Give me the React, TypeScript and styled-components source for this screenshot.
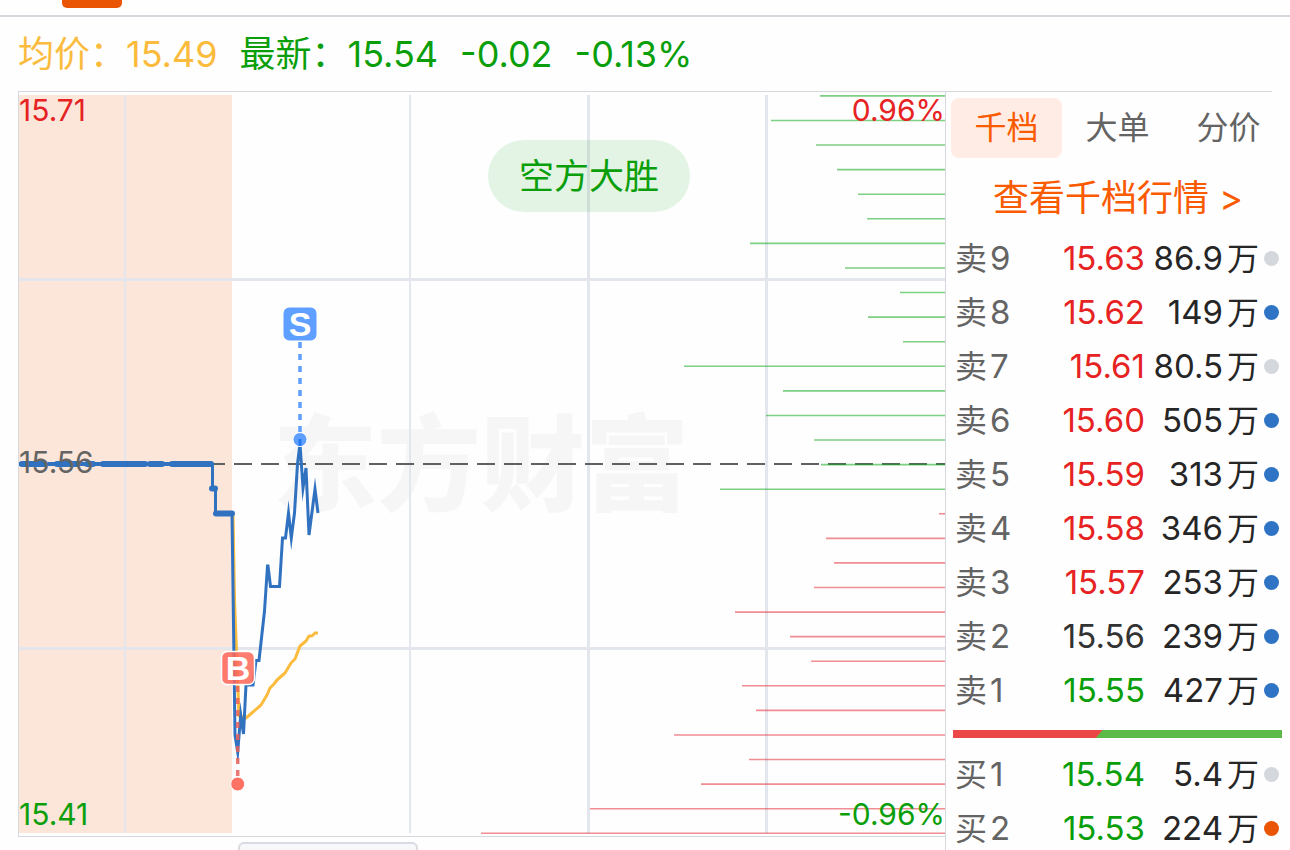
import React from "react";
import styled, { createGlobalStyle } from "styled-components";

const color = {
  rise: "#e62222",
  fall: "#0a9f0a",
  flat: "#333333",
  label: "#646464",
  ink: "#262626",
  accent: "#fa5a00",
  brand: "#ea5504",
  average: "#fbbb3c",
  line: "#d6d8de",
  grid: "#e4e6ee",
  price: "#3072c0",
  sell: "#5e9fff",
  buy: "#ff7364",
};

const GlobalStyle = createGlobalStyle`
  *, *::before, *::after { box-sizing: border-box; }
  body {
    margin: 0;
    background: #fefefe;
    font-family: Inter, "Noto Sans CJK SC", sans-serif;
    color: ${color.ink};
  }
`;

const Page = styled.main`
  height: 100vh;
  overflow: hidden;
  display: flex;
  flex-direction: column;
`;

const TabStrip = styled.div`
  flex: none;
  height: 17px;
  padding-left: 62px;
  border-bottom: 2px solid ${color.line};
`;

const TabIndicator = styled.div`
  width: 60px;
  height: 8px;
  border-radius: 0 0 5px 5px;
  background: ${color.brand};
`;

const Quote = styled.header`
  flex: none;
  height: 74px;
  padding: 0 18px;
  display: flex;
  align-items: center;
  gap: 22px;
  font-size: 36px;
  line-height: 40px;
  white-space: nowrap;
`;

const QuoteItem = styled.span<{ $tone: string }>`
  color: ${(p) => p.$tone};
`;

const Rule = styled.div`
  flex: none;
  height: 1px;
  margin: 0 18px;
  background: ${color.line};
`;

const Body = styled.div`
  flex: 1;
  min-height: 0;
  display: flex;
  padding-left: 18px;
`;

const ChartColumn = styled.section`
  flex: 1;
  min-width: 0;
  border-right: 1px solid ${color.line};
`;

const ChartFrame = styled.div`
  position: relative;
  border-left: 1px solid ${color.line};
  border-bottom: 1px solid ${color.line};
`;

const ChartSvg = styled.svg`
  display: block;
  width: 100%;
  height: auto;
`;

const Watermark = styled.text`
  font-family: "Noto Sans CJK SC", sans-serif;
  font-size: 104px;
  font-weight: 900;
  fill: #f6f6f6;
`;

const AxisText = styled.text<{ $tone: string }>`
  font-size: 30px;
  fill: ${(p) => p.$tone};
`;

const MarkerText = styled.text`
  font-family: "Liberation Sans", sans-serif;
  font-size: 34px;
  font-weight: 700;
  fill: #ffffff;
  text-anchor: middle;
`;

const Verdict = styled.div`
  position: absolute;
  top: 48px;
  left: 50%;
  margin-left: 6px;
  width: 202px;
  height: 72px;
  border-radius: 36px;
  display: flex;
  align-items: center;
  justify-content: center;
  background: rgba(10, 160, 20, 0.11);
  color: ${color.fall};
  font-size: 35px;
  line-height: 40px;
`;

const SubPanel = styled.div`
  width: 180px;
  height: 40px;
  margin: 5px 0 0 220px;
  border: 2px solid #dadbe2;
  border-radius: 6px;
  background: #f7f8fa;
`;

const Side = styled.aside`
  flex: none;
  width: 344px;
  padding-top: 6px;
`;

const Tabs = styled.div`
  display: flex;
  padding: 0 6px 0 5px;
`;

const Tab = styled.button<{ $active?: boolean }>`
  flex: 1;
  height: 60px;
  padding: 0;
  border: 0;
  border-radius: 8px;
  background: ${(p) => (p.$active ? "#ffede5" : "transparent")};
  color: ${(p) => (p.$active ? color.accent : color.label)};
  font: inherit;
  font-size: 32px;
  line-height: 40px;
`;

const MoreLink = styled.a`
  display: block;
  height: 73px;
  padding-top: 20px;
  color: ${color.accent};
  font-size: 36px;
  line-height: 40px;
  text-align: center;
  text-decoration: none;
  white-space: nowrap;
`;

const Book = styled.table`
  width: 324px;
  margin-left: 9px;
  table-layout: fixed;
  border-collapse: collapse;
  font-size: 33px;
  line-height: 40px;
  white-space: nowrap;
`;

const Level = styled.th`
  width: 60px;
  height: 54px;
  padding: 0;
  text-align: left;
  font-weight: 400;
  color: ${color.label};
`;

const Hanzi = styled.span`
  font-size: 32px;
`;

const LevelNumber = styled.span`
  margin-left: 3px;
`;

const Price = styled.td<{ $tone: string }>`
  width: 130px;
  padding: 0;
  text-align: right;
  color: ${(p) => p.$tone};
`;

const Amount = styled.td`
  width: 114px;
  padding: 0;
`;

const AmountInner = styled.div`
  display: flex;
  justify-content: flex-end;
  align-items: baseline;
  gap: 4px;
`;

const DotCell = styled.td`
  width: 20px;
  padding: 0 0 0 5px;
`;

const Dot = styled.div<{ $tone: string }>`
  width: 15px;
  height: 15px;
  border-radius: 50%;
  background: ${(p) => p.$tone};
`;

const Balance = styled.div`
  display: flex;
  height: 8px;
  margin: 13px 8px 9px 7px;
  background: #5cba47;
`;

const BalanceBuy = styled.div`
  height: 100%;
  background: #ec4747;
  clip-path: polygon(0 0, 100% 0, calc(100% - 7px) 100%, 0 100%);
`;

type Row = { side: string; n: number; price: string; tone: string; amount: string; dot: string };

const DOT = { idle: "#d4d7dc", sell: "#2f74c4", buy: "#ea5504" };

const asks: Row[] = [
  { side: "卖", n: 9, price: "15.63", tone: color.rise, amount: "86.9", dot: DOT.idle },
  { side: "卖", n: 8, price: "15.62", tone: color.rise, amount: "149", dot: DOT.sell },
  { side: "卖", n: 7, price: "15.61", tone: color.rise, amount: "80.5", dot: DOT.idle },
  { side: "卖", n: 6, price: "15.60", tone: color.rise, amount: "505", dot: DOT.sell },
  { side: "卖", n: 5, price: "15.59", tone: color.rise, amount: "313", dot: DOT.sell },
  { side: "卖", n: 4, price: "15.58", tone: color.rise, amount: "346", dot: DOT.sell },
  { side: "卖", n: 3, price: "15.57", tone: color.rise, amount: "253", dot: DOT.sell },
  { side: "卖", n: 2, price: "15.56", tone: color.flat, amount: "239", dot: DOT.sell },
  { side: "卖", n: 1, price: "15.55", tone: color.fall, amount: "427", dot: DOT.sell },
];

const bids: Row[] = [
  { side: "买", n: 1, price: "15.54", tone: color.fall, amount: "5.4", dot: DOT.idle },
  { side: "买", n: 2, price: "15.53", tone: color.fall, amount: "224", dot: DOT.buy },
];

// Left end of each depth bar, one bar per price tick from 15.71 down to 15.41.
const depth = [
  820, 771, 816, 837, 858, 867, 750, 845, 900, 868, 903, 684, 783, 766, 814, 821,
  720, 939, 826, 834, 814, 735, 790, 811, 742, 756, 674, 749, 701, 590, 481,
];
const FIRST_BID = 17;
const TICK = 24.58;

const OrderBook = ({ rows, label }: { rows: Row[]; label: string }) => (
  <Book aria-label={label}>
    <tbody>
      {rows.map((r) => (
        <tr key={r.n}>
          <Level scope="row">
            <Hanzi>{r.side}</Hanzi>
            <LevelNumber>{r.n}</LevelNumber>
          </Level>
          <Price $tone={r.tone}>{r.price}</Price>
          <Amount>
            <AmountInner>
              <span>{r.amount}</span>
              <Hanzi>万</Hanzi>
            </AmountInner>
          </Amount>
          <DotCell>
            <Dot $tone={r.dot} />
          </DotCell>
        </tr>
      ))}
    </tbody>
  </Book>
);

const Chart = () => (
  <ChartSvg viewBox="19 92 926 744" role="img" aria-label="分时走势">
    <rect x="19" y="95" width="213" height="738" fill="#fce6da" />
    <Watermark x="273" y="503">东方财富</Watermark>
    <g fill={color.grid}>
      <rect x="124" y="95" width="2" height="738" />
      <rect x="409" y="95" width="2" height="738" />
      <rect x="587" y="95" width="3" height="738" />
      <rect x="765" y="95" width="3" height="738" />
      <rect x="19" y="278" width="926" height="3" />
      <rect x="19" y="647" width="926" height="3" />
    </g>
    <path d="M18 464H945" stroke="#5f6062" strokeWidth="2" strokeDasharray="18 9" />
    {depth.map((x, i) => (
      <path
        key={i}
        d={`M${x} ${95.9 + i * TICK}H945`}
        stroke={i < FIRST_BID ? "#14aa1e" : "#e6323a"}
        strokeOpacity="0.55"
        strokeWidth="1.6"
      />
    ))}
    <path
      d="M233 514L234.500 600L238 690L239 716L246 718L253 712L261 705L267 695L270 688L274 684L277 680L285 673L291 663L295 659L300 646L306 641L309 636L312 636L315 633H318"
      fill="none"
      stroke={color.average}
      strokeWidth="3"
      strokeLinejoin="round"
    />
    <g fill="none" stroke={color.price}>
      <path d="M22 464H45M57 464H77M87 464H93M103 464H145M150 464H162M172 464H211M212 488.500H215M216 513.500H232" strokeWidth="6" strokeLinecap="round" />
      <path d="M19 464H212" strokeWidth="4" strokeDasharray="26 3 14 2 9 2" />
      <path
        d="M212.500 464V488.500H215.500V513.500H232L235 735L237.700 752L240.700 715L243.500 734L246 685H253L256 660.500H259L264.500 611L267.500 566H268L270.500 586.500H279.500L282.500 538H285.500L288.500 513L291.300 538L294.500 513L297.500 464L300 444L303 488L306 468L309 535L315 489L318 513"
        strokeWidth="3"
        strokeMiterlimit="10"
      />
    </g>
    <g>
      <path d="M300 342V433" stroke={color.sell} strokeWidth="3.500" strokeDasharray="6" />
      <circle cx="300" cy="439.500" r="7" fill={color.sell} stroke="#ffffff" strokeWidth="1" />
      <path d="M300 439V446" stroke="#2579ee" strokeWidth="3" />
      <rect x="283.500" y="307.500" width="33" height="33" rx="6" fill={color.sell} />
      <MarkerText x="300" y="336">S</MarkerText>
    </g>
    <g>
      <path d="M237.700 686V778" stroke="#e8605c" strokeOpacity="0.85" strokeWidth="3.500" strokeDasharray="6" />
      <circle cx="237.700" cy="784" r="7" fill={color.buy} stroke="#ffffff" strokeWidth="1" />
      <rect x="221.500" y="651.500" width="33" height="33" rx="6" fill="#ff6557" fillOpacity="0.85" stroke="#ffffff" strokeWidth="1.500" />
      <MarkerText x="238" y="680">B</MarkerText>
    </g>
    <AxisText $tone={color.rise} x="19" y="121">15.71</AxisText>
    <AxisText $tone={color.label} x="19" y="473">15.56</AxisText>
    <AxisText $tone={color.fall} x="19" y="825">15.41</AxisText>
    <AxisText $tone={color.rise} x="945" y="121" textAnchor="end">0.96%</AxisText>
    <AxisText $tone={color.fall} x="945" y="825" textAnchor="end">-0.96%</AxisText>
  </ChartSvg>
);

export default function App() {
  return (
    <>
      <GlobalStyle />
      <Page>
        <TabStrip>
          <TabIndicator />
        </TabStrip>
        <Quote>
          <QuoteItem $tone={color.average}>均价：15.49</QuoteItem>
          <QuoteItem $tone={color.fall}>最新：15.54</QuoteItem>
          <QuoteItem $tone={color.fall}>-0.02</QuoteItem>
          <QuoteItem $tone={color.fall}>-0.13%</QuoteItem>
        </Quote>
        <Rule />
        <Body>
          <ChartColumn>
            <ChartFrame>
              <Chart />
              <Verdict>空方大胜</Verdict>
            </ChartFrame>
            <SubPanel />
          </ChartColumn>
          <Side>
            <Tabs>
              <Tab type="button" $active>千档</Tab>
              <Tab type="button">大单</Tab>
              <Tab type="button">分价</Tab>
            </Tabs>
            <MoreLink href="#depth">查看千档行情 &gt;</MoreLink>
            <OrderBook rows={asks} label="卖盘" />
            <Balance>
              <BalanceBuy style={{ width: "45.5%" }} />
            </Balance>
            <OrderBook rows={bids} label="买盘" />
          </Side>
        </Body>
      </Page>
    </>
  );
}
